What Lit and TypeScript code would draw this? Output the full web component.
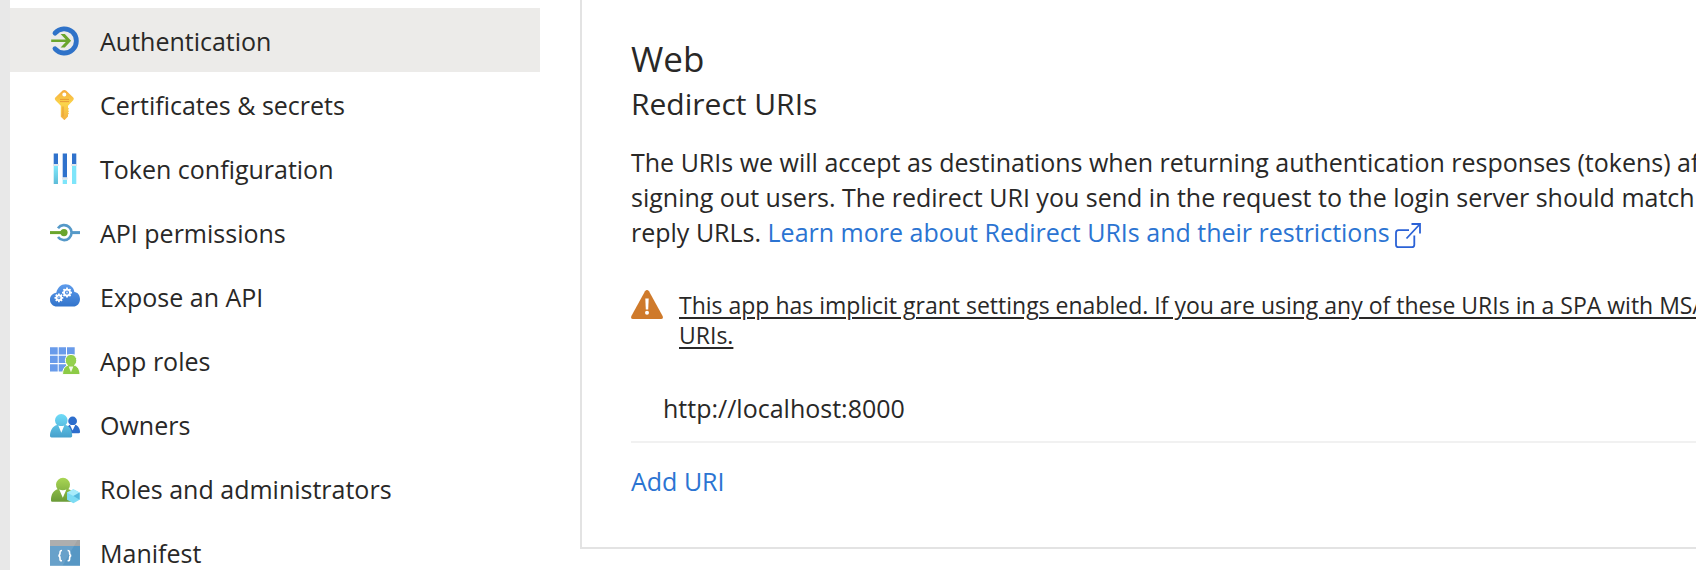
import { LitElement, html, svg, css, SVGTemplateResult } from "lit";
import { customElement, property, state } from "lit/decorators.js";

/** A small gear: a ring with eight teeth. */
const gear = (cx: number, cy: number, r: number) => svg`
  <circle cx=${cx} cy=${cy} r=${r} fill="none" stroke="#fff" stroke-width="1.8"/>
  ${[0, 45, 90, 135].map(
    (a) => svg`<path d="M${cx - r - 2} ${cy}h2M${cx + r} ${cy}h2" stroke="#fff" stroke-width="1.8" transform="rotate(${a} ${cx} ${cy})"/>`
  )}
  <circle cx=${cx} cy=${cy} r=${r / 3} fill="#fff" opacity=".7"/>`;

const icons: Record<string, SVGTemplateResult> = {
  auth: svg`
    <path d="M5 9.1a12.1 12.1 0 1 1 0 15.6" fill="none" stroke="#2f72c8" stroke-width="4.8" stroke-linecap="round"/>
    <path d="M1.2 15.5h14.6L10.6 10h4.2l6.3 6.8-6.3 6.7h-4.2l5.2-5.4H1.2z" fill="#6aa52c"/>`,
  key: svg`
    <defs><linearGradient id="g" x2="0" y2="1"><stop stop-color="#f5a93f"/><stop offset=".45" stop-color="#fbd54a"/><stop offset="1" stop-color="#f3b044"/></linearGradient></defs>
    <path fill="url(#g)" fill-rule="evenodd" d="M12.6 2.6q1.7-1.4 3.4 0l7 6.6q1.6 1.6 0 3.4l-5 5.2v2l1 1-1 1.2 1 1.2-1 1.2 1 1.2-1 1v1.8l-3.6 3.8-3.6-3.4V17.800L5.600 12.600q-1.600-1.800 0-3.400zM14.300 4.600a2 2 0 1 0 0 4 2 2 0 0 0 0-4z"/>
    <path d="M10 11.4h9M10 13.6h9M13 18.5v10" stroke="#e79b35"/>`,
  token: svg`
    <defs><linearGradient id="g" x2="0" y2="1"><stop stop-color="#80e8fb"/><stop offset="1" stop-color="#5dbcd8"/></linearGradient></defs>
    <path d="M3.7 1.5h4.3v10.5H3.7zM12.7 1.5h4.3v24h-4.3zM22 1.5h4.3v10.5H22z" fill="#2f72cc"/>
    <path d="M3.7 14h4.3v18H3.7z" fill="url(#g)"/>
    <path d="M12.7 27.5h4.3V32h-4.3zM22 14h4.3v18H22z" fill="#7ee5fa"/>
    <path d="M3 12h5.7v2H3zM12 25.5h5.7v2H12zM21.3 12H27v2h-5.7z" fill="#dfe6ec"/>`,
  permissions: svg`
    <path d="M8 12.2a7.5 7.5 0 1 1 0 8.8" fill="none" stroke="#5599c8" stroke-width="2.6"/>
    <path d="M22 16.6h8" stroke="#5599c8" stroke-width="3"/>
    <path d="M0 16.6h12" stroke="#6aa52c" stroke-width="3"/>
    <circle cx="14" cy="16.6" r="3.6" fill="#6aa52c"/>`,
  expose: svg`
    <defs><linearGradient id="g" x2="0" y2="1"><stop stop-color="#5e9cec"/><stop offset="1" stop-color="#3274cb"/></linearGradient></defs>
    <path fill="url(#g)" d="M7 26.5c-4 0-7-3-7-6.8 0-3.6 2.7-6.5 6.3-6.9C7.6 7.5 11 4.3 15.500 4.300c4.700 0 8.300 3.200 8.900 7.600 3.400.3 5.600 3.300 5.600 7 0 4.300-2.800 7.600-6.800 7.600z"/>
    ${gear(17, 12.6, 3)}${gear(8.9, 17.8, 2.4)}`,
  roles: svg`
    <path fill="#699bea" d="M0 3.3h7.7v7.300H0zM8.700 3.300h7.300v7.300H8.700zM17 3.300h7.700v7.300H17zM0 11.800h7.700v7.300H0zM8.700 11.800h7.300v7.300H8.700zM17 11.800h7.700v7.300H17zM0 20.300h7.700v7.300H0zM8.700 20.300h7.300v7.300H8.700z"/>
    <path d="M12.5 30.6c0-5 2-8.3 5.5-9.6a5.7 5.7 0 1 1 6 0c3.8 1.3 6 4.6 6 9.6z" fill="#8dcb46" stroke="#fff"/>
    <circle cx="21" cy="16.8" r="5.2" fill="#94d14e"/>
    <path d="m18.6 22.6 2.4 5.6 2.4-5.6z" fill="#f2f9e8"/>`,
  owners: svg`
    <defs><linearGradient id="g" x2="0" y2="1"><stop stop-color="#6fdcf8"/><stop offset="1" stop-color="#46a0cc"/></linearGradient></defs>
    <circle cx="22.6" cy="13" r="4.4" fill="#2d6dcc"/>
    <path d="M16 25.3c0-4.5 1.6-8 4.4-8.6h4.6c3.2.6 5 4.1 5 7.3q0 1.3-1.3 1.3z" fill="#2d6dcc"/>
    <path d="m20 17 2.6 5.4L25.2 17z" fill="#fff"/>
    <path fill="url(#g)" d="M1.5 29.4Q0 29.4 0 28c0-5.4 2.6-9.8 7-11a6.3 6.3 0 1 1 8.6 0c4.4 1.2 6.6 5.6 6.6 11q0 1.400-1.500 1.400z"/>
    <path d="m8.3 17.400 3 7.400 3-7.400q-3 1.200-6 0z" fill="#fff"/>`,
  admins: svg`
    <defs><linearGradient id="g" x2="0" y2="1"><stop stop-color="#a9d654"/><stop offset="1" stop-color="#6a9a37"/></linearGradient></defs>
    <path fill="url(#g)" d="M2.2 29.8Q1 29.8 1 28.4c0-6 2.4-10 6.6-11.2a7 7 0 1 1 10.8 0c4.400 1.200 6.600 5.200 6.600 11.200q0 1.400-1.200 1.400z"/>
    <path d="m9.2 17.400 3.600 8.400 3.600-8.400q-3.600 1.600-7.200 0z" fill="#fff"/>
    <path d="m23.400 17.200 6.200 3.400v7.200l-6.200 3.400-6.400-3.400v-7.200z" fill="#7ddcf4"/>
    <path d="m23.400 17.200 6.200 3.400-6.200 3.400-6.400-3.400z" fill="#a8ecfb"/>
    <path d="m23.400 24 6.200-3.400v7.200z" fill="#55b9dd"/>`,
  manifest: svg`
    <path d="M0 9.5h30v20.300H0z" fill="#5797c4"/>
    <path d="M0 4h30v6H0z" fill="#a5a5a5"/>
    <path d="M0 4h27.500L12.500 29.800H0z" fill="#fff" opacity=".1"/>
    <path d="M12 14.500c-2 0-2 .6-2 2.500 0 1.600-.3 2.400-1.600 2.600 1.300.2 1.600 1 1.600 2.600 0 2 0 2.500 2 2.500M17.600 14.500c2 0 2 .6 2 2.500 0 1.600.3 2.400 1.600 2.600-1.300.2-1.600 1-1.600 2.600 0 2 0 2.500-2 2.500" fill="none" stroke="#fff" stroke-width="1.6"/>`,
};

@customElement("menu-icon")
class MenuIcon extends LitElement {
  @property() name = "";
  static styles = css`
    :host { display: block; width: 30px; height: 32px; }
    .icon { display: block; width: 100%; height: 100%; }
  `;
  render() {
    return html`<svg class="icon" viewBox="0 0 30 32" aria-hidden="true">${icons[this.name]}</svg>`;
  }
}

@customElement("app-menu")
class AppMenu extends LitElement {
  @state() private selected = "auth";
  private items = [
    ["auth", "Authentication"],
    ["key", "Certificates & secrets"],
    ["token", "Token configuration"],
    ["permissions", "API permissions"],
    ["expose", "Expose an API"],
    ["roles", "App roles"],
    ["owners", "Owners"],
    ["admins", "Roles and administrators"],
    ["manifest", "Manifest"],
  ];
  static styles = css`
    :host { display: block; }
    .list { display: flex; flex-direction: column; padding-top: 8px; }
    .item {
      display: flex; align-items: center; gap: 20px;
      height: 64px; padding-left: 40px; box-sizing: border-box; flex: none;
      color: #292827; text-decoration: none; white-space: nowrap;
    }
    .selected { background: #ecebe9; }
    .label { padding-top: 2px; }
  `;
  render() {
    return html`<nav class="list" aria-label="Manage">
      ${this.items.map(
        ([id, label]) => html`<a
          class="item ${id === this.selected ? "selected" : ""}"
          href="#${id}"
          aria-current=${id === this.selected ? "page" : "false"}
          @click=${() => (this.selected = id)}
          ><menu-icon name=${id}></menu-icon><span class="label">${label}</span></a>`
      )}
    </nav>`;
  }
}

@customElement("app-root")
class AppRoot extends LitElement {
  static styles = css`
    :host {
      display: grid; grid-template-columns: 10px 530px minmax(0, 1fr);
      height: 100vh; overflow: hidden; background: #fff; color: #292827;
      font: 25px/35px "Open Sans", "Noto Sans", sans-serif;
    }
    .rail { background: #e8e8e8; }
    .content { padding-left: 40px; }
    .panel {
      border: solid #e3e3e3; border-width: 0 0 2px 2px;
      padding: 35px 0 48px 49px; overflow: hidden;
    }
    h2, h3, p { margin: 0; font-weight: 400; white-space: nowrap; }
    h2 { font-size: 35px; line-height: 48px; }
    h3 { font-size: 30px; line-height: 42px; }
    .intro { margin-top: 20px; }
    .link { color: #2b74d2; text-decoration: none; }
    .external { width: 26px; height: 26px; margin-left: 5px; vertical-align: -7px; }
    .warning { display: flex; gap: 16px; margin-top: 40px; }
    .sign { flex: none; width: 32px; height: 29px; }
    .notice {
      color: inherit; font-size: 23px; line-height: 30px; white-space: nowrap;
      text-decoration-thickness: 2px; text-underline-offset: 3px;
    }
    .entry { display: flex; margin-top: 33px; padding: 8px 0 15px 32px; border-bottom: 2px solid #f1f1f1; }
    .uri { flex: 1; min-width: 0; height: 35px; padding: 0; border: 0; outline: 0; background: none; font: inherit; color: inherit; }
    .add { display: block; margin-top: 21px; padding: 0; border: 0; background: none; font: inherit; color: #2b74d2; cursor: pointer; }
  `;
  render() {
    return html`
      <div class="rail"></div>
      <app-menu></app-menu>
      <main class="content">
        <section class="panel">
          <h2>Web</h2>
          <h3>Redirect URIs</h3>
          <p class="intro">
            The URIs we will accept as destinations when returning authentication responses (tokens) after<br />
            signing out users. The redirect URI you send in the request to the login server should match one<br />
            reply URLs.
            <a class="link" href="#learn">Learn more about Redirect URIs and their restrictions<svg class="external" viewBox="0 0 26 26" fill="none" stroke="#2b62d6" stroke-width="1.8" aria-hidden="true"><path d="M14 7.200H3.500Q1 7.200 1 9.700v12Q1 24.200 3.500 24.200h13.300q2.500 0 2.500-2.500V12.500M11.500 15.500 25 1M16.500 1H25v9.500"/></svg></a>
          </p>
          <div class="warning">
            <svg class="sign" viewBox="0 0 32 29" aria-hidden="true">
              <path d="M14 1.300q2-2.600 4 0L31.600 26q1 3-1.600 3H2q-2.600 0-1.600-3z" fill="#cf7a2b"/>
              <path d="M14.300 8.500h3.400l-.5 11h-2.400z" fill="#fff"/>
              <circle cx="16" cy="22.700" r="2" fill="#fff"/>
            </svg>
            <a class="notice" href="#migrate">This app has implicit grant settings enabled. If you are using any of these URIs in a SPA with MSAL<br />URIs.</a>
          </div>
          <div class="entry">
            <input class="uri" type="text" aria-label="Redirect URI" .value=${"http://localhost:8000"} />
          </div>
          <button class="add" type="button">Add URI</button>
        </section>
      </main>
    `;
  }
}
